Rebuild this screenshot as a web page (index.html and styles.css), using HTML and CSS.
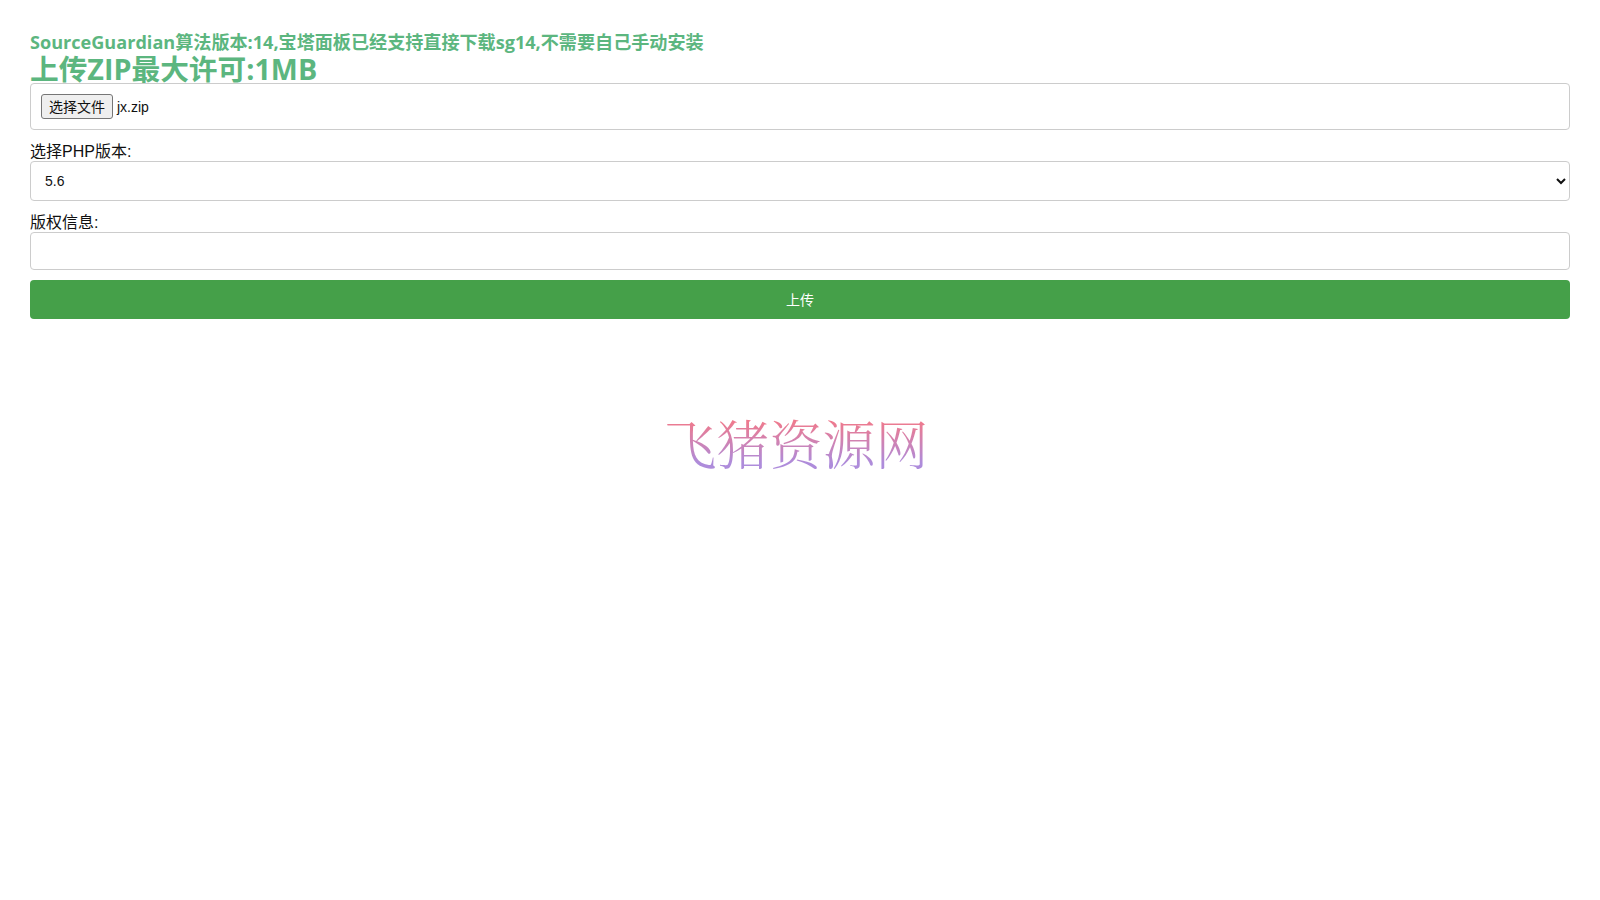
FILE: index.html
```html
<!DOCTYPE html>
<html lang="zh-CN">
<head>
    <meta charset="UTF-8">
    <meta name="viewport" content="width=device-width, initial-scale=1.0">
    <title>上传ZIP</title>
    <link rel="stylesheet" href="styles.css">
</head>
<body>
    <div class="container">
        <h3 class="notice">SourceGuardian算法版本:14,宝塔面板已经支持直接下载sg14,不需要自己手动安装</h3>
        <h2 class="limit">上传ZIP最大许可:1MB</h2>
        <form class="upload-form">
            <div class="file-box">
                <button type="button" class="file-btn">选择文件</button>
                <span class="file-name">jx.zip</span>
            </div>
            <label class="field-label" for="phpVersion">选择PHP版本:</label>
            <select id="phpVersion" class="field select-field">
                <option>5.6</option>
                <option>7.0</option>
                <option>7.4</option>
            </select>
            <label class="field-label" for="copyright">版权信息:</label>
            <input type="text" id="copyright" class="field text-field">
            <button type="button" class="submit-btn">上传</button>
        </form>
        <div class="brand">
            <span class="brand-text">飞猪资源网</span>
        </div>
    </div>
</body>
</html>
```

FILE: styles.css
```css
html, body {
    margin: 0;
    padding: 0;
    background-color: #fff;
}
body {
    font-family: "Liberation Sans", "Noto Sans CJK SC", sans-serif;
    font-size: 16px;
    color: #111;
}
.container {
    padding: 30px 30px 0;
}
.notice, .limit {
    margin: 0;
    font-family: "Open Sans", "Noto Sans CJK SC", sans-serif;
    font-weight: 700;
    color: #5cb67f;
}
.notice {
    font-size: 18.1px;
    line-height: 24px;
}
.limit {
    font-size: 28.7px;
    line-height: 29px;
}
.upload-form {
    display: flex;
    flex-direction: column;
}
.file-box {
    display: flex;
    align-items: center;
    gap: 4px;
    height: 47px;
    box-sizing: border-box;
    padding: 0 10px;
    border: 1px solid #ccc;
    border-radius: 4px;
    font-size: 14px;
}
.file-btn {
    height: 25px;
    width: 72px;
    padding: 0 0 2px;
    font-family: inherit;
    font-size: 14px;
    color: #111;
    background-color: #efefef;
    border: 1px solid #767676;
    border-radius: 3px;
}
.field-label {
    margin-top: 12px;
    margin-bottom: -1px;
    line-height: 20px;
}
.field {
    width: 100%;
    box-sizing: border-box;
    border: 1px solid #ccc;
    border-radius: 4px;
    background-color: #fff;
    font-family: inherit;
    font-size: 14px;
    color: #111;
}
.select-field {
    height: 40px;
    padding: 0 10px;
}
.text-field {
    height: 38px;
    padding: 0 10px;
}
.submit-btn {
    height: 39px;
    margin-top: 10px;
    padding: 0 0 2px;
    border: none;
    border-radius: 4px;
    background-color: #45a049;
    color: #fff;
    font-family: inherit;
    font-size: 14px;
}
.brand {
    display: flex;
    justify-content: center;
    margin-top: 90px;
    padding-right: 8px;
}
.brand-text {
    font-family: "Noto Serif CJK SC", "Noto Sans CJK SC", serif;
    font-size: 53px;
    font-weight: 300;
    line-height: 66px;
    background-image: linear-gradient(to bottom, #ee7a8e 20%, #ae8cdb 82%);
    -webkit-background-clip: text;
    background-clip: text;
    color: transparent;
}
```
